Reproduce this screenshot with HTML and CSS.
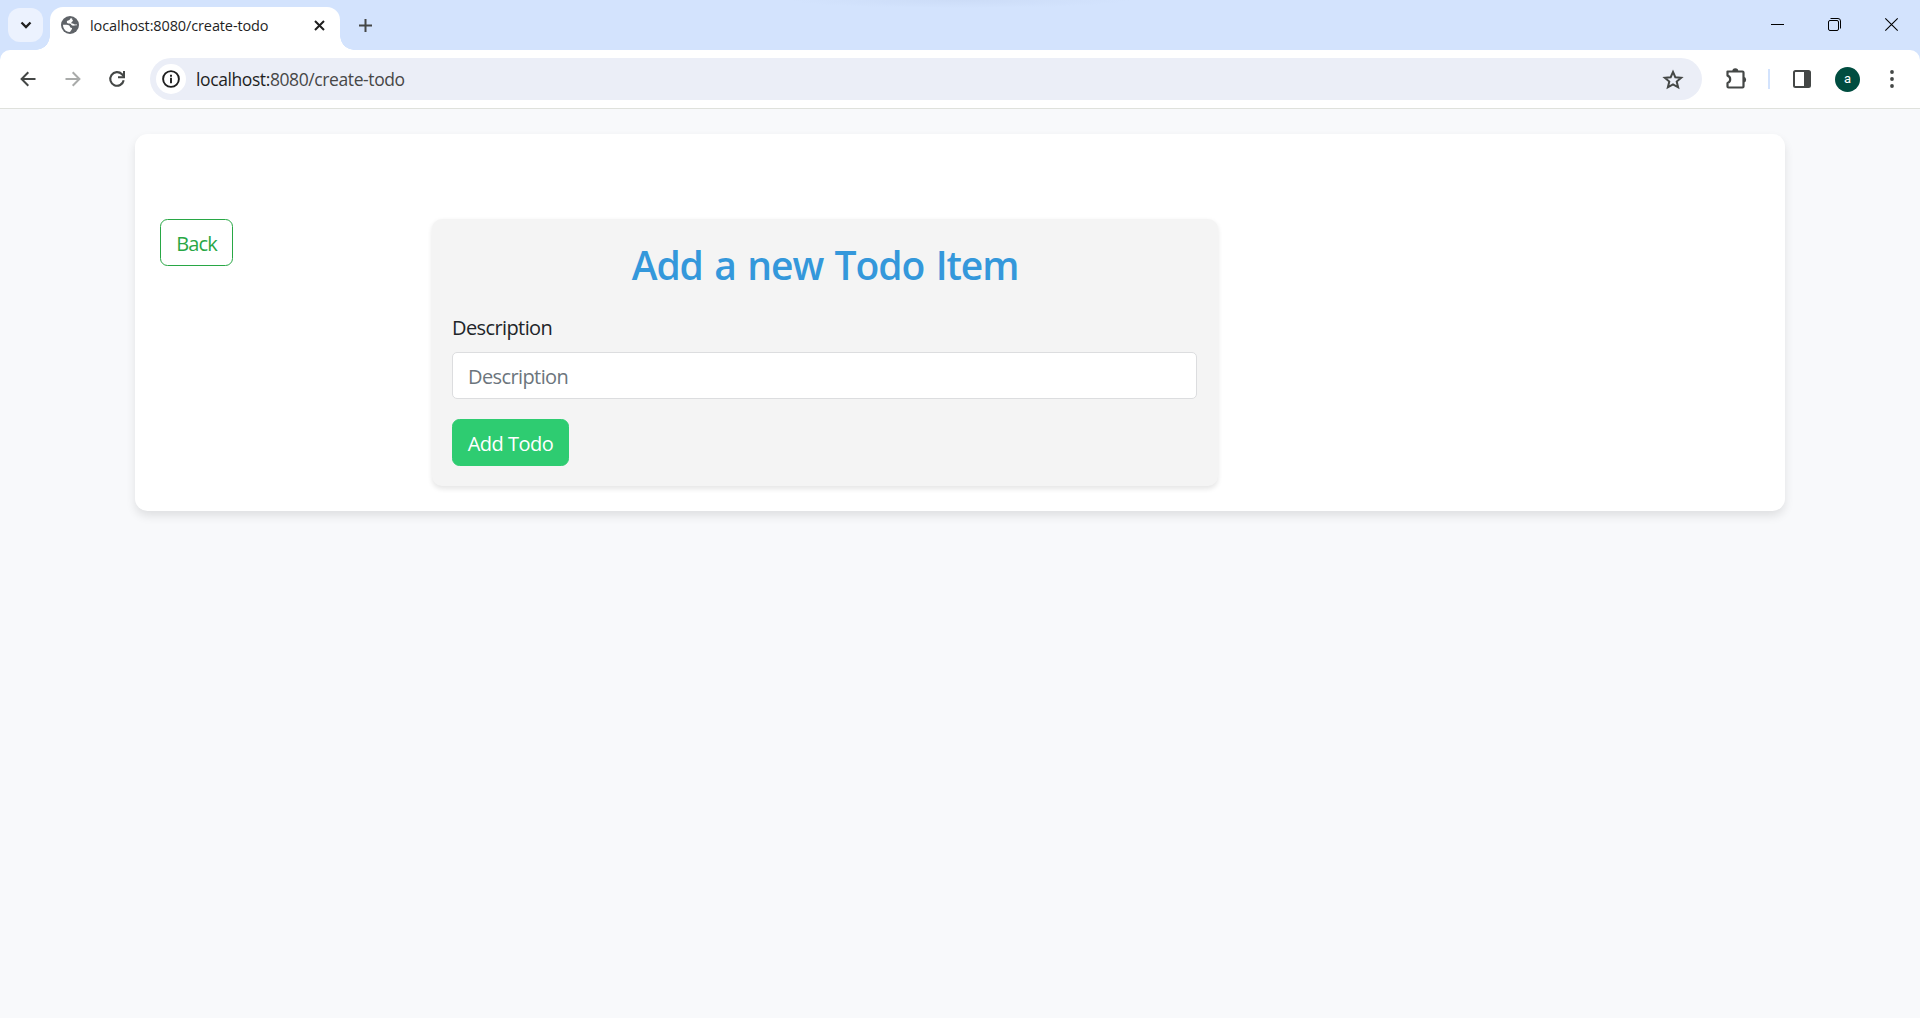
FILE: index.html
```html
<!DOCTYPE html>
<html lang="en">
<head>
<meta charset="utf-8">
<title>localhost:8080/create-todo</title>
<link rel="stylesheet" href="styles.css">
</head>
<body>
<header class="browser">
  <div class="tabstrip">
    <div class="tab-search"><svg width="12" height="8" viewBox="0 0 12 8"><path d="M1.500 1.500 6 6l4.500-4.500" fill="none" stroke="#1f1f1f" stroke-width="2.300"/></svg></div>
    <div class="tab">
      <svg class="favicon" width="18" height="18" viewBox="0 0 18 18"><circle cx="9" cy="9" r="9" fill="#5f6368"/><path d="M10.300 1.900C8.600 2.300 9.400 3.600 8 4.200c-1.300.5-2.200.4-2.200 1.900 0 1.300 1.300 1.500 2.700 1.500 1.700 0 1.300 1.600 2.700 2 1.300.3 2.500-.2 4.900-.3 0-3.700-2.300-6.600-5.800-7.400z" fill="#fff"/><path d="M10.600 2c-.2 1.500 1.500 1.300 1.300 2.700-.1 1-1.700 1-1.600 2.200.1 1 1.900.5 2.700 1.200.9.800 2 .4 3.600.2C16.600 5 14.300 2.400 10.600 2z" fill="#5f6368"/><path d="M2 8.800c2.500-.2 5.500-.2 6.500 1 .8 1 .3 1.800 1.600 2 1.200.2 1.300 1.100.4 1.900-.9.700-.6 2.200-2.200 2.300C4.700 15.800 2 12.800 2 8.800z" fill="#fff"/></svg>
      <span class="tab-title">localhost:8080/create-todo</span>
      <svg class="tab-close" width="11" height="11" viewBox="0 0 11 11"><path d="M1 1l9 9M10 1l-9 9" stroke="#1f1f1f" stroke-width="2"/></svg>
    </div>
    <svg class="new-tab" width="13" height="13" viewBox="0 0 13 13"><path d="M6.500 0v13M0 6.500h13" stroke="#444746" stroke-width="2"/></svg>
    <div class="window-controls">
      <svg width="13" height="13" viewBox="0 0 13 13"><path d="M0 6.500h13" stroke="#000"/></svg>
      <svg width="13" height="13" viewBox="0 0 13 13"><rect x=".5" y="2.500" width="10" height="10" rx="1.500" fill="none" stroke="#000"/><path d="M2.500 .5h7.500q2.500 0 2.500 2.500v7.500" fill="none" stroke="#000"/></svg>
      <svg width="13" height="13" viewBox="0 0 13 13"><path d="M.3.3l12.400 12.400M12.700.3.3 12.700" stroke="#000" stroke-width="1.100"/></svg>
    </div>
  </div>
  <div class="toolbar">
    <div class="nav">
      <svg width="16" height="16" viewBox="0 0 16 16"><path d="M15.500 8H2M8.300 1.300 1.600 8l6.700 6.700" fill="none" stroke="#444746" stroke-width="2"/></svg>
      <svg width="16" height="16" viewBox="0 0 16 16"><path d="M.5 8H14M7.700 1.300 14.400 8l-6.700 6.700" fill="none" stroke="#a9abaa" stroke-width="2"/></svg>
      <svg width="16" height="16" viewBox="0 0 16 16"><path d="M14.700 9.300A6.800 6.800 0 1 1 13 3.300L15 5.500" fill="none" stroke="#444746" stroke-width="2.100"/><path d="M15 0v6.200H9" fill="none" stroke="#444746" stroke-width="2"/></svg>
    </div>
    <div class="omnibox">
      <span class="site-info"><svg width="18" height="18" viewBox="0 0 18 18"><circle cx="9" cy="9" r="7.900" fill="none" stroke="#1f1f1f" stroke-width="1.900"/><path d="M9 7.800v5.400M9 4.700v2" stroke="#1f1f1f" stroke-width="1.900"/></svg></span>
      <span class="url">localhost:<span class="url-rest">8080/create-todo</span></span>
      <svg class="star" width="20" height="19" viewBox="0 0 20 19"><path d="M10 1.900l2.300 5.300 5.900.5-4.500 3.900 1.400 5.700-5.100-3-5.100 3 1.400-5.700-4.500-3.900 5.900-.5z" fill="none" stroke="#444746" stroke-width="2"/></svg>
    </div>
    <div class="actions">
      <svg class="puzzle" width="22" height="22" viewBox="0 0 22 22"><path d="M2.500 3.500h15q1 0 1 1v14q0 1-1 1h-14q-1 0-1-1v-3.500c3.600-1.200 3.600-6.200 0-7.400V3.500z" fill="none" stroke="#444746" stroke-width="2.200" stroke-linejoin="round"/><path d="M7.300 3.200a3 3 0 0 1 6 0zM18.800 8.800a2.900 2.900 0 0 1 0 5.700z" fill="#444746"/></svg>
      <span class="divider"></span>
      <svg class="panel" width="18" height="18" viewBox="0 0 18 18"><rect x="1" y="1" width="16" height="16" rx="1.500" fill="none" stroke="#444746" stroke-width="2"/><path d="M11 1h6v16h-6z" fill="#444746"/></svg>
      <span class="avatar">a</span>
      <svg class="menu" width="4" height="18" viewBox="0 0 4 18"><circle cx="2" cy="2" r="1.900" fill="#444746"/><circle cx="2" cy="9" r="1.900" fill="#444746"/><circle cx="2" cy="16" r="1.900" fill="#444746"/></svg>
    </div>
  </div>
</header>
<main class="container">
  <a class="btn btn-back"><span>Back</span></a>
  <form class="todo-form">
    <h1 class="title">Add a new Todo Item</h1>
    <label class="label" for="description">Description</label>
    <input class="field" id="description" type="text" placeholder="Description">
    <button class="btn btn-add" type="button">Add Todo</button>
  </form>
</main>
</body>
</html>
```
FILE: styles.css
```css
* { box-sizing: border-box; }
body {
  margin: 0;
  height: 1018px;
  overflow: hidden;
  background: #f8f9fb;
  color: #212529;
  font: 20px/30px "Open Sans", "Noto Sans", sans-serif;
}
svg { display: block; flex: none; overflow: visible; }

.browser { background: #d3e3fd; }
.tabstrip {
  display: flex;
  align-items: flex-start;
  height: 50px;
  background: radial-gradient(ellipse 170px 8px at 960px 0, #ccdcf7, #d3e3fd) no-repeat;
}
.tab-search {
  display: flex;
  align-items: center;
  justify-content: center;
  width: 35px;
  height: 34px;
  margin: 8px 0 0 8px;
  border-radius: 12px;
  background: #ecf2fe;
}
.tab {
  position: relative;
  display: flex;
  align-items: center;
  width: 290px;
  height: 43px;
  margin: 7px 0 0 7px;
  padding: 0 15px 7px 11px;
  border-radius: 13px 13px 0 0;
  background: #fff;
}
.tab::before, .tab::after {
  content: "";
  position: absolute;
  bottom: 0;
  width: 14px;
  height: 14px;
}
.tab::before { left: -14px; background: radial-gradient(circle at 0 0, transparent 13.5px, #fff 14px); }
.tab::after { right: -14px; background: radial-gradient(circle at 100% 0, transparent 13.5px, #fff 14px); }
.tab-title {
  margin-left: 11px;
  padding-top: 1px;
  color: #1f1f1f;
  font-size: 14.5px;
  line-height: 20px;
  letter-spacing: -0.12px;
  white-space: nowrap;
}
.tab-close { margin-left: auto; }
.new-tab { margin: 19px 0 0 19px; }
.window-controls {
  display: flex;
  gap: 44px;
  margin: 18px 22px 0 auto;
}

.toolbar {
  display: flex;
  align-items: center;
  height: 59px;
  padding: 0 24px 0 20px;
  border-bottom: 1px solid #dfe1dc;
  border-radius: 10px 10px 0 0;
  background: #fff;
}
.nav { display: flex; gap: 28.5px; }
.omnibox {
  display: flex;
  align-items: center;
  width: 1552px;
  height: 42px;
  margin-left: 25px;
  padding: 0 19px 0 6px;
  border-radius: 21px;
  background: #ebeef7;
}
.site-info {
  display: flex;
  align-items: center;
  justify-content: center;
  width: 30px;
  height: 30px;
  border-radius: 50%;
  background: #fff;
}
.url {
  margin-left: 10px;
  color: #1f1f1f;
  font-size: 17.5px;
  line-height: 24px;
  letter-spacing: -0.4px;
}
.url-rest { color: #474747; }
.star { margin-left: auto; }
.actions { display: flex; align-items: center; margin-left: 23px; }
.divider { width: 2px; height: 20px; margin-left: 21px; background: #d3e3fd; }
.panel { margin-left: 23px; }
.avatar {
  width: 25px;
  height: 25px;
  margin-left: 24px;
  border-radius: 50%;
  background: #004d40;
  color: #fff;
  font: 13px/23px Roboto, sans-serif;
  text-align: center;
}
.menu { margin-left: 30px; }

.container {
  display: flex;
  align-items: flex-start;
  gap: 199px;
  width: 1650px;
  height: 377px;
  margin: 25px auto 0;
  padding: 85px 25px 25px;
  border-radius: 12.5px;
  background: #fff;
  box-shadow: 0 5px 10px rgba(0, 0, 0, 0.1);
}
.btn {
  display: block;
  flex: none;
  height: 47px;
  border: 1px solid;
  border-radius: 7.5px;
  font: inherit;
  line-height: 47px;
  padding: 0;
  text-align: center;
  white-space: nowrap;
}
.btn-back { width: 73px; border-color: #28a745; color: #28a745; letter-spacing: -0.9px; }
.todo-form {
  width: 786px;
  height: 267px;
  padding: 20px;
  border-radius: 10px;
  background: #f4f4f4;
  box-shadow: 0 2.5px 5px rgba(0, 0, 0, 0.1);
}
.title {
  margin: 2px 0 24px;
  color: #3498db;
  font-size: 39px;
  font-weight: 600;
  line-height: 48px;
  letter-spacing: -1.1px;
  word-spacing: 2.5px;
  text-align: center;
  white-space: nowrap;
}
.label { display: block; width: max-content; margin-bottom: 9px; letter-spacing: -0.6px; }
.field {
  display: block;
  width: 745px;
  height: 47px;
  padding: 2px 15px 0;
  border: 1px solid #dcdddf;
  border-radius: 5px;
  outline: 0;
  background: #fff;
  font: inherit;
  letter-spacing: -0.6px;
}
.field::placeholder { color: #6c757d; opacity: 1; }
.btn-add {
  width: 117px;
  margin-top: 20px;
  border-color: #2ecc71;
  background: #2ecc71;
  color: #fff;
  letter-spacing: -0.5px;
}
```
